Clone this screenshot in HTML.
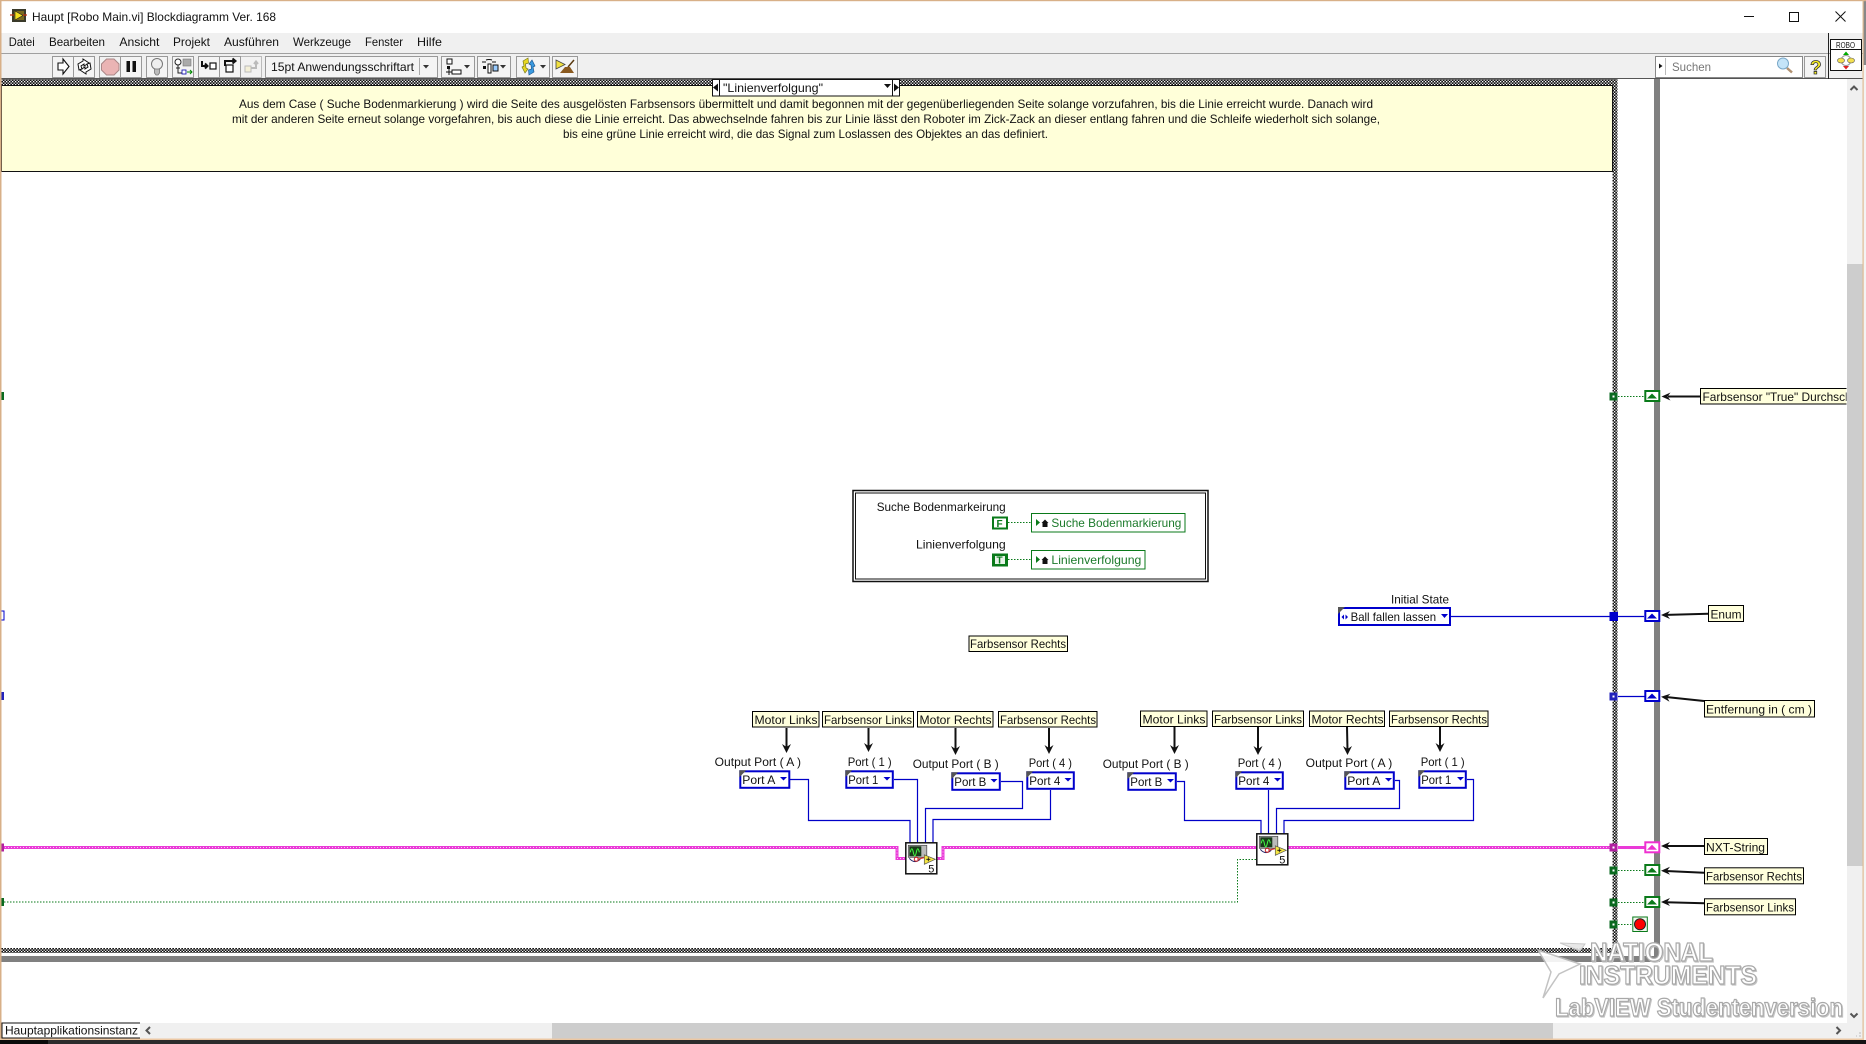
<!DOCTYPE html>
<html lang="de"><head><meta charset="utf-8"><title>Haupt [Robo Main.vi] Blockdiagramm Ver. 168</title>
<style>
html,body{margin:0;padding:0;background:#fff;overflow:hidden}
svg{display:block}
text{font-family:"Liberation Sans",sans-serif;font-size:12px;fill:#111}
.g{fill:#1c7a2b}
.w{fill:none;stroke:#0000c8;stroke-width:1.2}
.l{fill:#ffffdc;stroke:#000;stroke-width:1}
.c{fill:#fff;stroke:#0000cc;stroke-width:2}
.k{fill:#555}
.d{fill:#0000cc}
.a{fill:none;stroke:#111;stroke-width:2}
.gd{fill:none;stroke:#0a7a1a;stroke-width:1;stroke-dasharray:1.5 1.5}
.b{fill:#f4f4f4;stroke:#999;stroke-width:1}
.wm{font-weight:bold;fill:#fff;stroke:#a8a8a8;stroke-width:1.2;filter:drop-shadow(1px 1px 0 #c4c4c4)}
</style></head><body>
<svg width="1866" height="1044" viewBox="0 0 1866 1044" xmlns="http://www.w3.org/2000/svg">
<defs>
<pattern id="h" patternUnits="userSpaceOnUse" width="3" height="3"><rect width="3" height="3" fill="#111"/><rect width="1.3" height="1.3" fill="#fff"/><rect x="1.5" y="1.5" width="1.3" height="1.3" fill="#fff"/></pattern>
</defs>
<rect width="1866" height="1044" fill="#fff"/>
<!-- right outside -->
<rect x="1863" y="0" width="3" height="65" fill="#888"/>
<rect x="1863" y="65" width="3" height="975" fill="#f4f4f4"/>
<!-- menu & toolbar -->
<rect x="0" y="33" width="1863" height="20" fill="#f0f0f0"/>
<rect x="0" y="53" width="1863" height="1" fill="#a0a0a0"/>
<rect x="0" y="54" width="1863" height="24" fill="#f0f0f0"/>
<rect x="0" y="78" width="1863" height="1" fill="#555"/>
<!-- title -->
<rect x="12" y="9" width="14" height="13" fill="#3a3a2a"/>
<rect x="14" y="11" width="10" height="9" fill="#7a6a20"/>
<path d="M15 11l8 4.5-8 4.5z" fill="#f5e020" stroke="#222" stroke-width=".6"/>
<path d="M10 15h4M23 15h4" stroke="#c03010" stroke-width="1.2"/>
<text x="32" y="21" textLength="244" lengthAdjust="spacingAndGlyphs">Haupt [Robo Main.vi] Blockdiagramm Ver. 168</text>
<path d="M1744 16.5h10" stroke="#111" stroke-width="1"/>
<rect x="1789.5" y="12.5" width="9" height="9" fill="none" stroke="#111" stroke-width="1"/>
<path d="M1835.5 11.5l10 10M1845.5 11.5l-10 10" stroke="#111" stroke-width="1"/>
<!-- menu -->
<text x="8.7" y="46" textLength="26" lengthAdjust="spacingAndGlyphs">Datei</text>
<text x="49" y="46" textLength="56" lengthAdjust="spacingAndGlyphs">Bearbeiten</text>
<text x="119.4" y="46" textLength="40" lengthAdjust="spacingAndGlyphs">Ansicht</text>
<text x="173" y="46" textLength="37" lengthAdjust="spacingAndGlyphs">Projekt</text>
<text x="224" y="46" textLength="55" lengthAdjust="spacingAndGlyphs">Ausführen</text>
<text x="293" y="46" textLength="58" lengthAdjust="spacingAndGlyphs">Werkzeuge</text>
<text x="365" y="46" textLength="38" lengthAdjust="spacingAndGlyphs">Fenster</text>
<text x="417" y="46" textLength="25" lengthAdjust="spacingAndGlyphs">Hilfe</text>
<!-- toolbar -->
<rect class="b" x="52.5" y="56.5" width="21" height="21"/>
<path d="M58 63h5v-4l6 7.5-6 7.500v-4h-5z" fill="#fff" stroke="#111" stroke-width="1.1"/>
<rect class="b" x="73.500" y="56.5" width="21" height="21"/>
<path d="M79 70l-1-6 5-3v-2l6 4-5 3v-2l-3 2 1 3zM90 63l1 6-5 3v2l-6-4 5-3v2l3-2-1-3z" fill="#fff" stroke="#111" stroke-width="1"/>
<rect class="b" x="99.5" y="56.5" width="21" height="21" fill-opacity=".5"/>
<path d="M106.500 59h7.500l5 5v6l-5 5h-7.500l-5-5v-6z" fill="#eab4b4" stroke="#a88" stroke-width="1"/>
<rect class="b" x="120.500" y="56.5" width="21" height="21"/>
<path d="M126.500 61h3.500v11h-3.500zM132.500 61h3.500v11h-3.500z" fill="#111"/>
<rect class="b" x="146.500" y="56.5" width="21" height="21"/>
<circle cx="157" cy="64" r="5.5" fill="#eee" stroke="#777"/>
<path d="M154.500 69h5v4l-1.500 2h-2l-1.500-2z" fill="#bbb" stroke="#777" stroke-width=".8"/>
<rect class="b" x="172.500" y="56.5" width="21" height="21"/>
<circle cx="178" cy="62" r="3" fill="#fff" stroke="#222"/>
<path d="M178 65v8h7M176 68h4" stroke="#222" fill="none"/>
<rect x="183" y="59" width="8" height="7" fill="#aaa" stroke="#777" stroke-width=".6"/>
<rect x="182" y="70" width="4" height="4" fill="#fff" stroke="#00a" stroke-width=".8"/>
<path d="M187 72h5M190 70l2 2-2 2" stroke="#080" fill="none"/>
<rect class="b" x="198.5" y="56.5" width="21" height="21"/>
<path d="M202 61v5h5M205 63.500l2.500 2.500-2.500 2.500" fill="none" stroke="#111" stroke-width="2"/>
<rect x="210" y="63" width="6" height="6" fill="#fff" stroke="#111" stroke-width="1.2"/>
<rect class="b" x="219.5" y="56.5" width="21" height="21"/>
<path d="M225 66v-5h10M232.500 58.500l3 2.500-3 2.500" fill="none" stroke="#111" stroke-width="2"/>
<rect x="226" y="65" width="7" height="7" fill="#fff" stroke="#111" stroke-width="1.2"/>
<rect class="b" x="240.500" y="56.5" width="21" height="21" opacity=".6"/>
<rect x="245" y="66" width="6" height="6" fill="#f4f0d8" stroke="#bbb"/>
<path d="M251 68h5v-6M254 64l2-2.500 2 2.500" fill="none" stroke="#bbb" stroke-width="2"/>
<rect class="b" x="265.500" y="56.500" width="172" height="21" fill="#fafafa"/>
<text x="271" y="71" textLength="143" lengthAdjust="spacingAndGlyphs">15pt Anwendungsschriftart</text>
<path d="M419.500 58v17" stroke="#aaa"/>
<path d="M423 65h6l-3 3.500z" fill="#333"/>
<rect class="b" x="441.500" y="56.5" width="33" height="21"/>
<rect x="447" y="59" width="5" height="5" fill="#fff" stroke="#111"/>
<rect x="447" y="66" width="3" height="3" fill="#111"/>
<path d="M446 72h8M449 69v6" stroke="#111"/>
<rect x="452" y="70" width="9" height="4" fill="#fff" stroke="#111"/>
<path d="M464 65h6l-3 3.500z" fill="#333"/>
<rect class="b" x="477.5" y="56.5" width="33" height="21"/>
<path d="M482 62h4M492 62h4M486 60q3-1 6 0" fill="none" stroke="#111"/>
<rect x="483" y="66" width="3" height="3" fill="#111"/>
<rect x="488" y="64" width="3" height="9" fill="#fff" stroke="#111"/>
<rect x="493" y="65" width="5" height="6" fill="#9cf" stroke="#111"/>
<path d="M500 65h6l-3 3.500z" fill="#333"/>
<rect class="b" x="516.5" y="56.5" width="33" height="21"/>
<path d="M528 58l-5 3 1 5-2 1 3 6 3-4-2-1-.500-4 3-1z" fill="#e8d820" stroke="#7a7a20" stroke-width=".7"/>
<path d="M529 75l5-3-1-5 2-1-3-6-3 4 2 1 .500 4-3 1z" fill="#3a9ae0" stroke="#205a90" stroke-width=".7"/>
<path d="M540 65h6l-3 3.500z" fill="#333"/>
<rect class="b" x="552.5" y="56.5" width="25" height="21"/>
<path d="M556 60l9 4.500-9 4.500z" fill="#f0e040" stroke="#444" stroke-width=".8"/>
<path d="M574 60l-6 7" stroke="#5a3a10" stroke-width="1.500"/>
<path d="M560 73l5-6 5 0 4 6z" fill="#8a5a20"/>
<!-- search -->
<rect x="1655.5" y="56.500" width="147" height="21" fill="#fff" stroke="#888"/>
<path d="M1659 63.500l3.500 2.500-3.500 2.500z" fill="#111"/>
<path d="M1665.500 58v17" stroke="#bbb"/>
<text x="1672" y="71" textLength="39" lengthAdjust="spacingAndGlyphs" style="fill:#777">Suchen</text>
<path d="M1787 68l5 4.500" stroke="#b09070" stroke-width="2.500"/>
<circle cx="1783" cy="63.500" r="5.500" fill="#c4e4f8" stroke="#7aa8c8"/>
<rect class="b" x="1804.500" y="56.500" width="21" height="21"/>
<text x="1810" y="74" style="font-size:19px;font-weight:bold;fill:#f8f020;stroke:#333;stroke-width:.8">?</text>
<!-- robo icon -->
<path d="M1828.500 33v46" stroke="#222"/>
<rect x="1830.500" y="39.500" width="31" height="31" fill="#fff" stroke="#111"/>
<path d="M1830 49.500h32" stroke="#111"/>
<text x="1836" y="48" textLength="19" style="font-size:8px;letter-spacing:0" lengthAdjust="spacingAndGlyphs">ROBO</text>
<circle cx="1846" cy="60.500" r="5" fill="none" stroke="#999"/>
<path d="M1843 55l3-3.500 3 3.500z" fill="#0a0"/>
<path d="M1843 66l3 3.500 3-3.500z" fill="#d22"/>
<ellipse cx="1841" cy="60.500" rx="3.500" ry="2.500" fill="#f4e050" stroke="#555" stroke-width=".6"/>
<ellipse cx="1851" cy="60.500" rx="3.500" ry="2.500" fill="#f4e050" stroke="#555" stroke-width=".6"/>
<!-- structures -->
<rect x="1.500" y="79" width="1616" height="6" fill="url(#h)"/>
<rect x="1612.500" y="79" width="5" height="874" fill="url(#h)"/>
<rect x="1.500" y="948" width="1616" height="5" fill="url(#h)"/>
<rect x="1.500" y="85.500" width="1611" height="86" fill="#ffffd9" stroke="#111"/>
<rect x="1654" y="79" width="6" height="883" fill="#808080"/>
<rect x="1.500" y="956" width="1658.500" height="6" fill="#808080"/>
<!-- note -->
<text x="239" y="108" textLength="1134" lengthAdjust="spacingAndGlyphs">Aus dem Case ( Suche Bodenmarkierung ) wird die Seite des ausgelösten Farbsensors übermittelt und damit begonnen mit der gegenüberliegenden Seite solange vorzufahren, bis die Linie erreicht wurde. Danach wird</text>
<text x="232" y="123" textLength="1148" lengthAdjust="spacingAndGlyphs">mit der anderen Seite erneut solange vorgefahren, bis auch diese die Linie erreicht. Das abwechselnde fahren bis zur Linie lässt den Roboter im Zick-Zack an dieser entlang fahren und die Schleife wiederholt sich solange,</text>
<text x="563" y="138" textLength="485" lengthAdjust="spacingAndGlyphs">bis eine grüne Linie erreicht wird, die das Signal zum Loslassen des Objektes an das definiert.</text>
<!-- selector -->
<rect x="712.500" y="79.500" width="187" height="16.500" fill="#fff" stroke="#111"/>
<path d="M719.500 79v17M892.500 79v17" stroke="#111"/>
<path d="M718 83.500v8l-5-4z" fill="#111"/><path d="M894 83.500v8l5-4z" fill="#111"/>
<path d="M884 84h7l-3.500 4z" fill="#111"/>
<text x="723" y="92" textLength="100" lengthAdjust="spacingAndGlyphs">"Linienverfolgung"</text>
<!-- box -->
<rect x="853" y="490.500" width="355" height="91" fill="#fff" stroke="#111" stroke-width="1.500"/>
<rect x="855.500" y="493" width="350" height="86" fill="none" stroke="#111" stroke-width="1"/>
<text x="876.700" y="511" textLength="129" lengthAdjust="spacingAndGlyphs">Suche Bodenmarkeirung</text>
<rect x="993" y="517.500" width="14" height="11" fill="#fff" stroke="#0a7a1a" stroke-width="2"/>
<text x="996.500" y="527" style="font-size:10px;font-weight:bold;fill:#0a7a1a">F</text>
<path class="gd" d="M1008 522.500h23M1008 559.500h23"/>
<rect x="1031.500" y="513.500" width="153.500" height="18.500" fill="#fff" stroke="#0a7a1a"/>
<path d="M1036 519v7l4-3.500z" fill="#0a7a1a"/>
<path d="M1041.500 523l3.500-3.500 3.500 3.500h-1v4h-5v-4z" fill="#111"/>
<text class="g" x="1051.400" y="527" textLength="130" lengthAdjust="spacingAndGlyphs">Suche Bodenmarkierung</text>
<text x="916" y="548.500" textLength="89.700" lengthAdjust="spacingAndGlyphs">Linienverfolgung</text>
<rect x="992" y="553.500" width="16" height="13" fill="#0a7a1a"/>
<rect x="995" y="556" width="10" height="8" fill="#fff" opacity=".9"/>
<text x="996.500" y="563.500" style="font-size:10px;font-weight:bold;fill:#0a7a1a">T</text>
<rect x="1031.500" y="550.500" width="113.500" height="18.500" fill="#fff" stroke="#0a7a1a"/>
<path d="M1036 556v7l4-3.500z" fill="#0a7a1a"/>
<path d="M1041.500 560l3.500-3.500 3.500 3.500h-1v4h-5v-4z" fill="#111"/>
<text class="g" x="1051.400" y="564" textLength="90" lengthAdjust="spacingAndGlyphs">Linienverfolgung</text>
<!-- initial state -->
<text x="1391" y="603.500" textLength="58" lengthAdjust="spacingAndGlyphs">Initial State</text>
<path class="w" d="M1451 616.500h193"/>
<rect class="c" x="1339" y="608" width="111" height="17"/>
<path class="k" d="M1338 607h7l-7 7z"/>
<path d="M1344 614.500l-2.500 2.500 2.500 2.500zM1345.500 614.500l2.500 2.500-2.500 2.500z" fill="#0000cc"/>
<text x="1350.600" y="621" textLength="85.500" lengthAdjust="spacingAndGlyphs">Ball fallen lassen</text>
<path class="d" d="M1441 614h7l-3.500 4z"/>
<rect class="l" x="969" y="636" width="98.500" height="15.500"/>
<text x="970" y="648" textLength="96" lengthAdjust="spacingAndGlyphs">Farbsensor Rechts</text>
<!-- top labels group 1 -->
<rect class="l" x="752.500" y="711.500" width="66.500" height="15.500"/><text x="754.500" y="724" textLength="63" lengthAdjust="spacingAndGlyphs">Motor Links</text>
<rect class="l" x="822.500" y="711.500" width="91" height="15.500"/><text x="824" y="724" textLength="88" lengthAdjust="spacingAndGlyphs">Farbsensor Links</text>
<rect class="l" x="917.500" y="711.500" width="75.500" height="15.500"/><text x="919.500" y="724" textLength="72" lengthAdjust="spacingAndGlyphs">Motor Rechts</text>
<rect class="l" x="998.500" y="711.500" width="98.500" height="15.500"/><text x="1000" y="724" textLength="96" lengthAdjust="spacingAndGlyphs">Farbsensor Rechts</text>
<path class="a" d="M786.500 728v20M868.500 728v20M955.500 728v22M1049 728v21"/>
<path d="M786.500 753l-4.500-9 4.500 3 4.500-3zM868.500 752l-4.500-9 4.500 3 4.500-3zM955.500 755l-4.500-9 4.500 3 4.500-3zM1049 754l-4.500-9 4.500 3 4.500-3z" fill="#111"/>
<text x="714.700" y="766" textLength="86.300" lengthAdjust="spacingAndGlyphs">Output Port ( A )</text>
<text x="847.700" y="766" textLength="44" lengthAdjust="spacingAndGlyphs">Port ( 1 )</text>
<text x="912.700" y="768" textLength="86" lengthAdjust="spacingAndGlyphs">Output Port ( B )</text>
<text x="1028.700" y="767" textLength="43.300" lengthAdjust="spacingAndGlyphs">Port ( 4 )</text>
<!-- wires 1 -->
<path class="w" d="M790 779.500h18.500v41h101.500v22M894 779.500h23.500v63M1001 781.500h21.500v27h-97v34M1050.500 790v29.500h-117.500v23"/>
<!-- controls 1 -->
<rect class="c" x="740.300" y="771.300" width="49" height="16.500"/><path class="k" d="M739.300 770.300h7l-7 7z"/><text x="742.300" y="784" textLength="33" lengthAdjust="spacingAndGlyphs">Port A</text><path class="d" d="M780 777h7l-3.500 3.500z"/>
<rect class="c" x="846.300" y="771.300" width="46.500" height="16.500"/><path class="k" d="M845.300 770.300h7l-7 7z"/><text x="848.300" y="784" textLength="30" lengthAdjust="spacingAndGlyphs">Port 1</text><path class="d" d="M883.500 777h7l-3.500 3.500z"/>
<rect class="c" x="952.300" y="773.300" width="47.500" height="16.500"/><path class="k" d="M951.300 772.300h7l-7 7z"/><text x="954.300" y="786" textLength="32" lengthAdjust="spacingAndGlyphs">Port B</text><path class="d" d="M990.500 779h7l-3.500 3.500z"/>
<rect class="c" x="1027.300" y="772.300" width="46.500" height="16.500"/><path class="k" d="M1026.300 771.300h7l-7 7z"/><text x="1029.300" y="785" textLength="31" lengthAdjust="spacingAndGlyphs">Port 4</text><path class="d" d="M1064.500 778h7l-3.500 3.500z"/>
<!-- top labels group 2 -->
<rect class="l" x="1140.500" y="711" width="66.500" height="15.500"/><text x="1142.500" y="723.500" textLength="63" lengthAdjust="spacingAndGlyphs">Motor Links</text>
<rect class="l" x="1212.500" y="711" width="91" height="15.500"/><text x="1214" y="723.500" textLength="88" lengthAdjust="spacingAndGlyphs">Farbsensor Links</text>
<rect class="l" x="1309.500" y="711" width="75" height="15.500"/><text x="1311.500" y="723.500" textLength="72" lengthAdjust="spacingAndGlyphs">Motor Rechts</text>
<rect class="l" x="1389.500" y="711" width="98.500" height="15.500"/><text x="1391" y="723.500" textLength="96" lengthAdjust="spacingAndGlyphs">Farbsensor Rechts</text>
<path class="a" d="M1174.500 727v22M1258 727v23M1347 727l.5 23M1440 727v20"/>
<path d="M1174.500 754l-4.500-9 4.500 3 4.500-3zM1258 755l-4.500-9 4.500 3 4.500-3zM1347.500 755l-4.500-9 4.500 3 4.500-3zM1440 752l-4.500-9 4.500 3 4.500-3z" fill="#111"/>
<text x="1102.700" y="768" textLength="86" lengthAdjust="spacingAndGlyphs">Output Port ( B )</text>
<text x="1237.700" y="767" textLength="44" lengthAdjust="spacingAndGlyphs">Port ( 4 )</text>
<text x="1305.700" y="767" textLength="86.600" lengthAdjust="spacingAndGlyphs">Output Port ( A )</text>
<text x="1420.700" y="766" textLength="44" lengthAdjust="spacingAndGlyphs">Port ( 1 )</text>
<path class="w" d="M1177 781.500h7.500v39h76.500v13M1268.500 790v43.500M1395 780.500h4.500v28h-123v25M1467 779.500h6.500v41h-189.500v13"/>
<rect class="c" x="1128.300" y="773.300" width="47.500" height="16.500"/><path class="k" d="M1127.300 772.300h7l-7 7z"/><text x="1130.300" y="786" textLength="32" lengthAdjust="spacingAndGlyphs">Port B</text><path class="d" d="M1167 779h7l-3.500 3.500z"/>
<rect class="c" x="1236.300" y="772.300" width="46.500" height="16.500"/><path class="k" d="M1235.300 771.300h7l-7 7z"/><text x="1238.300" y="785" textLength="31" lengthAdjust="spacingAndGlyphs">Port 4</text><path class="d" d="M1274 778h7l-3.500 3.500z"/>
<rect class="c" x="1345.300" y="772.300" width="48.500" height="16.500"/><path class="k" d="M1344.300 771.300h7l-7 7z"/><text x="1347.300" y="785" textLength="33" lengthAdjust="spacingAndGlyphs">Port A</text><path class="d" d="M1385 778h7l-3.500 3.500z"/>
<rect class="c" x="1419.300" y="771.300" width="46.500" height="16.500"/><path class="k" d="M1418.300 770.300h7l-7 7z"/><text x="1421.300" y="784" textLength="30" lengthAdjust="spacingAndGlyphs">Port 1</text><path class="d" d="M1457 777h7l-3.500 3.500z"/>
<!-- pink wire -->
<path d="M2 847.500h895v11h8M937 858.500h6v-11h313M1288 847.500h325M1618 847.500h27" fill="none" stroke="#ea3ad8" stroke-width="3"/>
<path d="M2 847.500h895v11h8M937 858.500h6v-11h313M1288 847.500h325" fill="none" stroke="#fff" stroke-width="1" stroke-dasharray="1 2" opacity=".7"/>
<path class="gd" d="M1256 859.500h-18.500v42.500H2"/>
<!-- nodes -->
<g transform="translate(905.300 842.300)">
<rect x=".5" y=".5" width="31" height="31" fill="#fff" stroke="#111" stroke-width="1.500"/>
<rect x="3" y="3" width="18.500" height="12" fill="#bbb" stroke="#444" stroke-width=".7"/><rect x="4" y="4" width="12" height="10" fill="#1a3a1a"/>
<path d="M5 10q1.500-7 3 0t3 0 3 0" fill="none" stroke="#4f4" stroke-width="1"/>
<path d="M4 16q5 6 11 1" fill="none" stroke="#226" stroke-width="1"/><circle cx="11" cy="17" r="2" fill="none" stroke="#c22"/><path d="M12 17l8-2" stroke="#d33" stroke-width="1.200"/>
<path d="M19 12.500l11 4.500-11 5z" fill="#f5e642" stroke="#555" stroke-width=".7"/><path d="M21 17h4M23 15v4" stroke="#111" stroke-width=".8"/>
<text x="23" y="30" style="font-size:11px">5</text></g>
<g transform="translate(1256.300 833.300)">
<rect x=".5" y=".5" width="31" height="31" fill="#fff" stroke="#111" stroke-width="1.500"/>
<rect x="3" y="3" width="18.500" height="12" fill="#bbb" stroke="#444" stroke-width=".7"/><rect x="4" y="4" width="12" height="10" fill="#1a3a1a"/>
<path d="M5 10q1.500-7 3 0t3 0 3 0" fill="none" stroke="#4f4" stroke-width="1"/>
<path d="M4 16q5 6 11 1" fill="none" stroke="#226" stroke-width="1"/><circle cx="11" cy="17" r="2" fill="none" stroke="#c22"/><path d="M12 17l8-2" stroke="#d33" stroke-width="1.200"/>
<path d="M19 12.500l11 4.500-11 5z" fill="#f5e642" stroke="#555" stroke-width=".7"/><path d="M21 17h4M23 15v4" stroke="#111" stroke-width=".8"/>
<text x="23" y="30" style="font-size:11px">5</text></g>
<!-- tunnels right -->
<path class="gd" d="M1618 396.500h27M1618 870.500h27M1618 902.500h27M1618 924.500h15"/>
<path class="w" d="M1618 696.500h27"/>
<rect x="1609.500" y="392.500" width="8" height="8" fill="#0a6a20"/><rect x="1612.500" y="395.500" width="2" height="2" fill="#fff"/>
<rect x="1609.500" y="612" width="8.500" height="9" fill="#0000cc"/>
<rect x="1609.500" y="692.500" width="8" height="8" fill="#2222bb"/><rect x="1612.500" y="695.500" width="2" height="2" fill="#fff"/>
<rect x="1609.500" y="843.500" width="8" height="8" fill="#b020a0"/><rect x="1612.500" y="846.500" width="2" height="2" fill="#fff"/>
<rect x="1609.500" y="866.500" width="8" height="8" fill="#0a6a20"/><rect x="1612.500" y="869.500" width="2" height="2" fill="#fff"/>
<rect x="1609.500" y="898.500" width="8" height="8" fill="#0a6a20"/><rect x="1612.500" y="901.500" width="2" height="2" fill="#fff"/>
<rect x="1609.500" y="920.500" width="8" height="8" fill="#0a6a20"/><rect x="1612.500" y="923.500" width="2" height="2" fill="#fff"/>
<!-- tunnels left -->
<rect x="1.500" y="392" width="2.500" height="8" fill="#0a6a20"/>
<path d="M1.500 611h2.500v9h-2.500" fill="none" stroke="#0000cc"/>
<rect x="1.500" y="692" width="2.500" height="8" fill="#2222bb"/>
<rect x="1.500" y="843.500" width="2.500" height="8" fill="#b020a0"/>
<rect x="1.500" y="898" width="2.500" height="8" fill="#0a6a20"/>
<!-- shift registers -->
<g stroke-width="2">
<rect x="1645.300" y="391" width="14" height="10" fill="#fff" stroke="#0a7a1a"/><path d="M1647 398.500l5-5 5 5z" fill="#0a7a1a" stroke="none"/>
<rect x="1645.300" y="611" width="14" height="10" fill="#fff" stroke="#0000cc"/><path d="M1647 618.500l5-5 5 5z" fill="#0000cc" stroke="none"/>
<rect x="1645.300" y="691" width="14" height="10" fill="#fff" stroke="#0000cc"/><path d="M1647 698.500l5-5 5 5z" fill="#0000cc" stroke="none"/>
<rect x="1645.300" y="842.300" width="14" height="10" fill="#fff" stroke="#ee30d0"/><path d="M1647 849.800l5-5 5 5z" fill="#ee30d0" stroke="none"/>
<rect x="1645.300" y="865" width="14" height="10" fill="#fff" stroke="#0a7a1a"/><path d="M1647 872.500l5-5 5 5z" fill="#0a7a1a" stroke="none"/>
<rect x="1645.300" y="897" width="14" height="10" fill="#fff" stroke="#0a7a1a"/><path d="M1647 904.500l5-5 5 5z" fill="#0a7a1a" stroke="none"/>
</g>
<!-- stop terminal -->
<rect x="1632.800" y="917" width="14.500" height="14.500" fill="#f2f8ee" stroke="#0a7a1a"/>
<circle cx="1640" cy="924.300" r="5.500" fill="#f00" stroke="#222" stroke-width="1"/>
<!-- arrows right -->
<g stroke="#111" stroke-width="2" fill="none">
<path d="M1700 396.500h-32M1708 613.700l-41 1.200M1704 701l-38-4M1704 846h-38M1704 872.700l-38-1.700M1704 903.300l-38-1"/>
</g>
<g fill="#111">
<path d="M1661.500 396.500l9-4-3 4 3 4z"/>
<path d="M1661 615l9-4-3 4 3 4z"/>
<path d="M1661 696.700l9.500-3-3.500 3.500 2.500 4.500z"/>
<path d="M1661 846l9-4-3 4 3 4z"/>
<path d="M1661 870.700l9-4-3 4 3 4z"/>
<path d="M1661 902l9-4-3 4 3 4z"/>
</g>
<!-- right labels -->
<svg x="1700" y="388" width="146.500" height="17" viewBox="1700 388 146.500 17" overflow="hidden">
<rect class="l" x="1700.500" y="388.500" width="170" height="15.500"/>
<text x="1702.500" y="401" textLength="165" lengthAdjust="spacingAndGlyphs">Farbsensor "True" Durchschnitt</text>
</svg>
<rect class="l" x="1708.500" y="605.500" width="35" height="16"/><text x="1710.500" y="618.500" textLength="31" lengthAdjust="spacingAndGlyphs">Enum</text>
<rect class="l" x="1704.500" y="700.500" width="110" height="16.500"/><text x="1706" y="713.500" textLength="106" lengthAdjust="spacingAndGlyphs">Entfernung in ( cm )</text>
<rect class="l" x="1704.500" y="838.500" width="63" height="16"/><text x="1706" y="851.500" textLength="59" lengthAdjust="spacingAndGlyphs">NXT-String</text>
<rect class="l" x="1704.500" y="867.800" width="99" height="16"/><text x="1706" y="880.500" textLength="96" lengthAdjust="spacingAndGlyphs">Farbsensor Rechts</text>
<rect class="l" x="1704.500" y="898.800" width="91" height="16"/><text x="1706" y="911.500" textLength="88" lengthAdjust="spacingAndGlyphs">Farbsensor Links</text>
<!-- scrollbars -->
<rect x="1847" y="79" width="16" height="960" fill="#f0f0f0"/>
<rect x="1847" y="264" width="15.500" height="602" fill="#cdcdcd"/>
<path d="M1850.500 90l3.500-3.500 3.500 3.500" fill="none" stroke="#555" stroke-width="2"/>
<path d="M1850.500 1013.500l3.500 3.500 3.500-3.500" fill="none" stroke="#555" stroke-width="2"/>
<rect x="0" y="1023" width="1863" height="16" fill="#f0f0f0"/>
<rect x="552" y="1023" width="1001" height="15.500" fill="#cdcdcd"/>
<path d="M150 1027l-3.500 3.500 3.500 3.500" fill="none" stroke="#555" stroke-width="2"/>
<path d="M1836.500 1027l3.500 3.500-3.500 3.500" fill="none" stroke="#555" stroke-width="2"/>
<path d="M1859 1036h2M1856 1036h1M1859 1033h2" stroke="#bbb"/>
<path d="M140 1023h-138v15h138" fill="#fff" stroke="#111"/>
<text x="5" y="1034.500" textLength="133" lengthAdjust="spacingAndGlyphs">Hauptapplikationsinstanz</text>
<!-- watermark -->
<path d="M1538 950l42 14-21 10 -16 24 8-26z" fill="#fff" stroke="#bdbdbd" stroke-width="1.500" opacity=".9"/>
<path d="M1560 943l20 8 5-7z" fill="#e6e6e6" stroke="#c4c4c4" opacity=".9"/>
<text class="wm" x="1590" y="961" textLength="123" lengthAdjust="spacingAndGlyphs" style="font-size:26px">NATIONAL</text>
<text class="wm" x="1579" y="984" textLength="178" lengthAdjust="spacingAndGlyphs" style="font-size:26px">INSTRUMENTS</text>
<text class="wm" x="1555" y="1016" textLength="288" lengthAdjust="spacingAndGlyphs" style="font-size:25px">LabVIEW Studentenversion</text>
<!-- window border -->
<rect x="0" y="0" width="1866" height="1.200" fill="#d8b088"/>
<rect x="0" y="0" width="1.500" height="1040" fill="#d8b088"/>
<rect x="1862.500" y="0" width="1.200" height="1040" fill="#e0bc94"/>
<rect x="0" y="1038.500" width="1864" height="1.500" fill="#ecc8a4"/>
<rect x="0" y="1040" width="1866" height="4" fill="#2c2c2c"/>
<rect x="0" y="1040" width="48" height="4" fill="#0a0a0a"/>
<rect x="1500" y="1040" width="366" height="4" fill="#141414"/>
</svg>
</body></html>
